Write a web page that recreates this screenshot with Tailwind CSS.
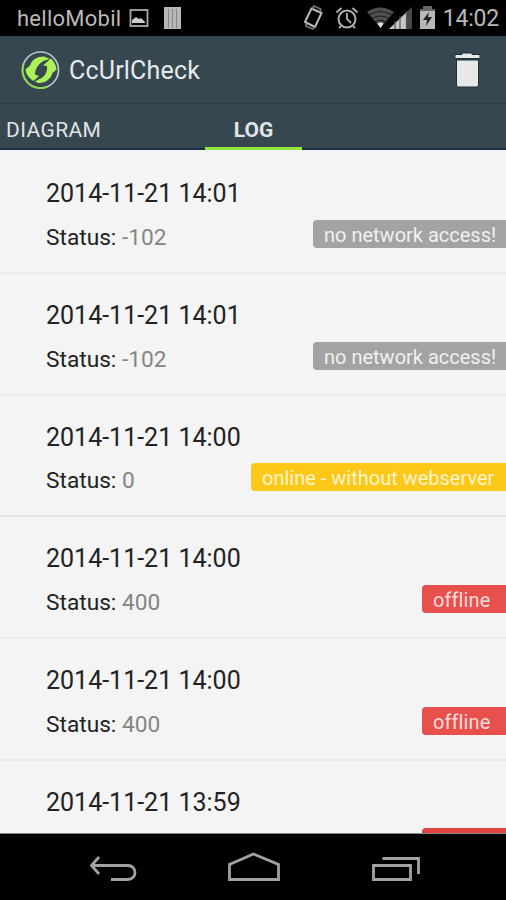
<!DOCTYPE html>
<html lang="en">
<head>
<meta charset="utf-8">
<title>CcUrlCheck</title>
<script src="https://cdn.jsdelivr.net/npm/@tailwindcss/browser@4"></script>
</head>
<body class="w-[506px] h-[900px] overflow-hidden bg-black font-['Roboto',sans-serif]">
<div class="flex flex-col w-[506px] h-[900px] overflow-hidden">
  <!-- System status bar -->
  <div class="flex h-9 shrink-0 items-center bg-black pl-[17px] pr-[7px] text-[#b9b9b9]">
    <span class="w-[105px] whitespace-nowrap pt-0.5 text-[22px] leading-9 tracking-[0.25px]">helloMobil</span>
    <svg class="ml-[7px]" width="20" height="36" viewBox="0 0 20 36"><rect x="1.500" y="10" width="17" height="16" fill="none" stroke="#aaa" stroke-width="1.800"/><path d="M3 23v-3l4-3 3 2 2-1 4 4v1z" fill="#ccc"/></svg>
    <svg class="ml-[14px]" width="20" height="36" viewBox="0 0 20 36"><path d="M1 7h17v22H1z" fill="#b8b8b8"/><path d="M5.500 9v19M9.500 9v19M13.500 9v19" stroke="#888" stroke-width="1"/></svg>
    <svg class="ml-auto" width="144" height="36" viewBox="0 0 144 36" fill="none">
      <path d="M10.500 8.500L20.500 13l-6.500 14L4 22z" stroke="#b8b8b8" stroke-width="2" stroke-linejoin="round"/><path d="M11 8.500l2-2.500 6.500 3v3M5 23.500V26l6.500 3 2.500-2" stroke="#777" stroke-width="1.800"/>
      <circle cx="46" cy="19" r="8.500" stroke="#b0b0b0" stroke-width="2"/><path d="M46 13v6l4 4M35.500 12.500l5-4.500M56.500 12.500l-5-4.500M40 26l-2 2M52 26l2 2" stroke="#b0b0b0" stroke-width="1.800"/>
      <path d="M66 12q13-9 27 0L79.500 28z" fill="#4f4f4f"/><path d="M68 15q11.500-7 23 0M71 18.500q8.500-5 17 0M74 22q5.500-3.500 11 0" stroke="#1c1c1c" stroke-width="1.100"/><path d="M76.500 23.500q3-2 6 0l-3 4.500z" fill="#e5e5e5"/>
      <path d="M88 29l23-22v22z" fill="#484848"/><path d="M88 29l17-16.200V29z" fill="#c5c5c5"/><path d="M94 21v8M99 16v13M105.500 11v18" stroke="#555" stroke-width="1.200"/>
      <path d="M119 9h15v20h-15z" fill="#b8b8b8"/><path d="M119 9h3V6h9v3h3v2h-15z" fill="#666"/><path d="M128 12l-6 8h4l-1 6 6-9h-4z" fill="#222"/>
    </svg>
    <span class="-ml-0.5 whitespace-nowrap pt-0.5 text-[23px] leading-9 tracking-[-0.2px]">14:02</span>
  </div>

  <!-- Action bar -->
  <div class="flex h-[68px] shrink-0 items-center border-b border-[#2f3e46] bg-[#37474f] pl-[21px] pr-[23px]">
    <svg width="40" height="40" viewBox="0 0 40 40" fill="none">
      <circle cx="19.500" cy="20" r="18" stroke="#b9c6cc" stroke-width="1.700"/>
      <path d="M2.600 13.800A18 18 0 0 0 26 36.800" stroke="#8bdc4d" stroke-width="1.900"/>
      <path d="M4.500 19.500L9 15.500C11 9.500 16 6.500 23 6.500l6 2.500-5.500 1.500C18 13 14 18.500 14 24.500l4 1.500-5.500 5C7.500 28 5 24 4.500 19.500z" fill="#aaf255"/>
      <path d="M35.500 19.500l-4 3.500C29.500 29.500 24 33.500 17 33l-3-1.500 4.500-2.500c6-2.500 8-7.500 7.500-13l-4-.5L30 8.500c3 3 5 6.500 5.500 11z" fill="#aaf255"/>
    </svg>
    <span class="ml-2 whitespace-nowrap pt-0.5 text-[25px] leading-8 tracking-[0.2px] text-[#e5eaec]">CcUrlCheck</span>
    <svg class="ml-auto" width="30" height="40" viewBox="0 0 30 40"><path d="M2 6.500v-2h7V3h10v1.500h8v4H2zM3.500 10h22v25q0 2-2 2h-18q-2 0-2-2z" fill="#e8e8e8" stroke="#19323b" stroke-width="1"/></svg>
  </div>

  <!-- Tabs -->
  <div class="flex h-[46px] shrink-0 border-b-2 border-[#1b2d40] bg-[#37474f] text-[21px] leading-[53px] text-[#e0e5e8]">
    <span class="w-[205px] whitespace-nowrap pl-1.5 tracking-[0.4px]">DIAGRAM</span>
    <span class="-mb-0.5 h-[46px] w-[97px] border-b-3 border-[#93e83c] text-center font-bold">LOG</span>
  </div>

  <!-- Log entries -->
  <main class="flex h-[684px] shrink-0 flex-col overflow-hidden border-b border-[#888] bg-[#f4f4f4] pt-[2.4px] text-[#222]">
    <section class="h-[121.7px] shrink-0 border-b-2 border-[#ebebeb] pl-[46px] pt-[26px]">
      <h2 class="whitespace-nowrap text-[25px] leading-8">2014-11-21 14:01</h2>
      <div class="mt-[9.500px] flex h-[30px] items-start justify-between"><p class="whitespace-nowrap text-[22.7px] leading-[35px]">Status: <span class="text-[#858585]">-102</span></p><span class="h-7 w-[193px] whitespace-nowrap rounded-l-sm bg-[#a3a3a3] pl-[11px] text-[20px] leading-[30px] text-[#f0f0f0]">no network access!</span></div>
    </section>
    <section class="h-[121.7px] shrink-0 border-b-2 border-[#ebebeb] pl-[46px] pt-[26px]">
      <h2 class="whitespace-nowrap text-[25px] leading-8">2014-11-21 14:01</h2>
      <div class="mt-[9.500px] flex h-[30px] items-start justify-between"><p class="whitespace-nowrap text-[22.7px] leading-[35px]">Status: <span class="text-[#858585]">-102</span></p><span class="h-7 w-[193px] whitespace-nowrap rounded-l-sm bg-[#a3a3a3] pl-[11px] text-[20px] leading-[30px] text-[#f0f0f0]">no network access!</span></div>
    </section>
    <section class="h-[121.7px] shrink-0 border-b-2 border-[#e4e4e4] pl-[46px] pt-[26px]">
      <h2 class="whitespace-nowrap text-[25px] leading-8">2014-11-21 14:00</h2>
      <div class="mt-[9.500px] flex h-[30px] items-start justify-between"><p class="whitespace-nowrap text-[22.7px] leading-[35px]">Status: <span class="text-[#858585]">0</span></p><span class="h-7 w-[255px] whitespace-nowrap rounded-l-sm bg-[#fec818] pl-[11px] text-[20px] leading-[30px] text-[#fff5cf]">online - without webserver</span></div>
    </section>
    <section class="h-[121.7px] shrink-0 border-b-2 border-[#ebebeb] pl-[46px] pt-[26px]">
      <h2 class="whitespace-nowrap text-[25px] leading-8">2014-11-21 14:00</h2>
      <div class="mt-[9.500px] flex h-[30px] items-start justify-between"><p class="whitespace-nowrap text-[22.7px] leading-[35px]">Status: <span class="text-[#858585]">400</span></p><span class="h-7 w-[84px] whitespace-nowrap rounded-l-sm bg-[#e7504d] pl-[11px] text-[20px] leading-[30px] tracking-[0.1px] text-[#ffdedb]">offline</span></div>
    </section>
    <section class="h-[121.7px] shrink-0 border-b-2 border-[#ebebeb] pl-[46px] pt-[26px]">
      <h2 class="whitespace-nowrap text-[25px] leading-8">2014-11-21 14:00</h2>
      <div class="mt-[9.500px] flex h-[30px] items-start justify-between"><p class="whitespace-nowrap text-[22.7px] leading-[35px]">Status: <span class="text-[#858585]">400</span></p><span class="h-7 w-[84px] whitespace-nowrap rounded-l-sm bg-[#e7504d] pl-[11px] text-[20px] leading-[30px] tracking-[0.1px] text-[#ffdedb]">offline</span></div>
    </section>
    <section class="h-[121.7px] shrink-0 pl-[46px] pt-[26px]">
      <h2 class="whitespace-nowrap text-[25px] leading-8">2014-11-21 13:59</h2>
      <div class="mt-[9.500px] flex justify-end"><span class="h-7 w-[84px] rounded-l-sm bg-[#e0443f]"></span></div>
    </section>
  </main>

  <!-- Navigation bar -->
  <nav class="flex h-[66px] shrink-0 items-center bg-black pl-[87px] pt-0.5">
    <svg width="50" height="34" viewBox="0 0 50 34" fill="none" stroke="#a2a2a2" stroke-width="2.800"><path d="M12 6L4.500 14.500 12 23M4.500 14.500H41a7 7 0 0 1 0 14H24"/></svg>
    <svg class="ml-[88px]" width="56" height="34" viewBox="0 0 56 34" fill="none" stroke="#a2a2a2" stroke-width="2.800"><path d="M4.500 28.500V13.500L28.500 3l25 10.500v15z"/></svg>
    <svg class="ml-[88px]" width="52" height="34" viewBox="0 0 52 34" fill="none" stroke="#a2a2a2" stroke-width="2.800"><path d="M4.500 14.500h37v14h-37zM13.500 7.500h36V23"/></svg>
  </nav>
</div>
</body>
</html>
